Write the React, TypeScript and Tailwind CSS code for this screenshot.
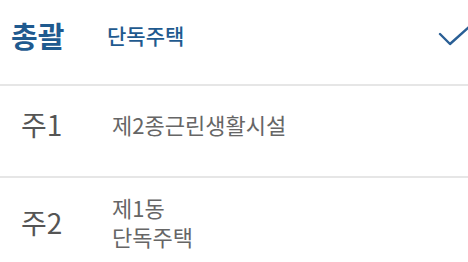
const font = { fontFamily: '"Noto Sans CJK KR", "Noto Sans", sans-serif' };

const rows = [
  { label: '주1', lines: ['제2종근린생활시설'] },
  { label: '주2', lines: ['제1동', '단독주택'] },
];

export default function App() {
  return (
    <div className="w-[468px] h-[262px] overflow-hidden bg-white" style={font}>
      <div className="flex h-[86px] items-center border-b-2 border-[#e6e6e6] pb-[12px]">
        <div className="w-[107px] pl-[11px] text-[29px] font-bold text-[#1f5a8f]">총괄</div>
        <div className="flex-1 text-[21px] font-medium text-[#1f5a8f]">단독주택</div>
        <svg width="34" height="24" viewBox="0 0 34 24" className="mr-[-4px]">
          <path d="M2 10 L12 20 L32 2" fill="none" stroke="#2a5f95" strokeWidth="2.4" strokeLinecap="round" strokeLinejoin="round" />
        </svg>
      </div>
      {rows.map((row, i) => (
        <div key={i} className={`flex h-[92px] items-center ${i === 0 ? 'border-b-2 border-[#e6e6e6] pb-[14px]' : 'pb-[4px]'}`}>
          <div className="w-[112px] pl-[21px] text-[28px] text-[#555]">{row.label}</div>
          <div className="flex-1 text-[22px] leading-[29px] text-[#666]">
            {row.lines.map((l) => (
              <div key={l}>{l}</div>
            ))}
          </div>
        </div>
      ))}
    </div>
  );
}
